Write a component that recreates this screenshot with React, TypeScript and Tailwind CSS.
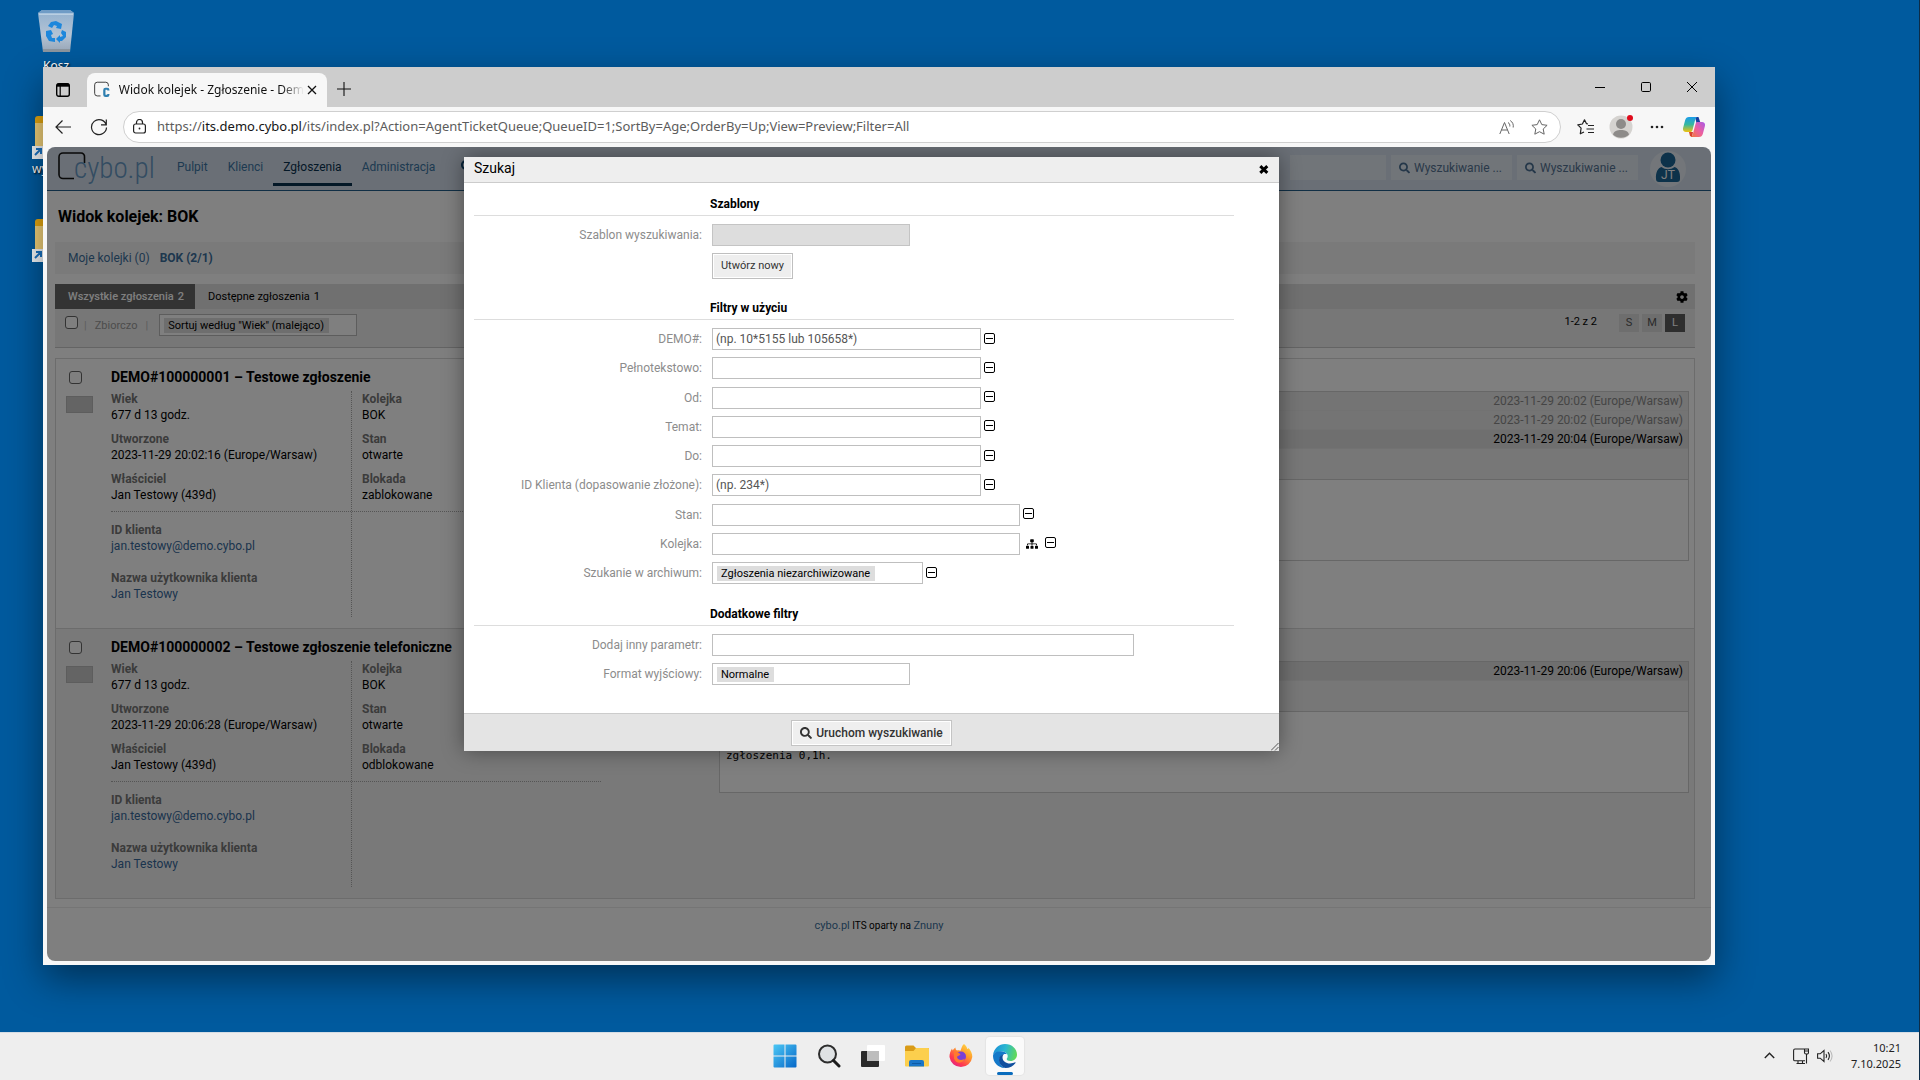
import type { ReactNode } from "react";
import { FaCog, FaSearch, FaSitemap } from "react-icons/fa";

type Field = { label: string; value: string; link?: boolean };

type Ticket = {
    id: string;
    title: string;
    left: Field[];
    right: Field[];
    articles: { date: string; active?: boolean }[];
    body: string;
    shaded?: boolean;
};

const tickets: Ticket[] = [
    {
        id: "DEMO#100000001",
        title: "Testowe zgłoszenie",
        left: [
            { label: "Wiek", value: "677 d 13 godz." },
            { label: "Utworzone", value: "2023-11-29 20:02:16 (Europe/Warsaw)" },
            { label: "Właściciel", value: "Jan Testowy (439d)" },
        ],
        right: [
            { label: "Kolejka", value: "BOK" },
            { label: "Stan", value: "otwarte" },
            { label: "Blokada", value: "zablokowane" },
        ],
        articles: [
            { date: "2023-11-29 20:02 (Europe/Warsaw)" },
            { date: "2023-11-29 20:02 (Europe/Warsaw)" },
            { date: "2023-11-29 20:04 (Europe/Warsaw)", active: true },
        ],
        body: "",
    },
    {
        id: "DEMO#100000002",
        title: "Testowe zgłoszenie telefoniczne",
        left: [
            { label: "Wiek", value: "677 d 13 godz." },
            { label: "Utworzone", value: "2023-11-29 20:06:28 (Europe/Warsaw)" },
            { label: "Właściciel", value: "Jan Testowy (439d)" },
        ],
        right: [
            { label: "Kolejka", value: "BOK" },
            { label: "Stan", value: "otwarte" },
            { label: "Blokada", value: "odblokowane" },
        ],
        articles: [{ date: "2023-11-29 20:06 (Europe/Warsaw)", active: true }],
        body: "zgłoszenia 0,1h.",
        shaded: true,
    },
];

/* ---------- desktop ---------- */

function RecycleBin() {
    return (
        <svg width="36" height="42" viewBox="0 0 36 42" aria-hidden>
            <defs>
                <linearGradient id="bin" x1="0" y1="0" x2="0" y2="1">
                    <stop offset="0" stopColor="#8fb0cf" />
                    <stop offset="0.6" stopColor="#b4c3d4" />
                    <stop offset="1" stopColor="#9aa9ba" />
                </linearGradient>
            </defs>
            <path d="M0 3 4 0h28l4 3-4 39H5z" fill="url(#bin)" />
            <path d="M0 3 4 0h28l4 3-2 1H2z" fill="#6f9cc6" />
            <path d="M1 4h34" stroke="#dce9f4" strokeWidth="1" />
            <path d="M5 39h27v3H5z" fill="#8d969f" />
            <g fill="#1d87dc">
                <path d="m13 12 5-1 4 2 2 1-1 5-5-1 1-2-3-1-2 3-4-2z" />
                <path d="m8 21 5-1 2 4-2 1 1 3h3v4l-6-1-3-5z" />
                <path d="m24 20 4 2 0 5-4 4-2 0v2l-4-4 4-4v2l3-1-2-3z" />
            </g>
        </svg>
    );
}

function FolderShortcut({ label }: { label?: string }) {
    return (
        <div className="flex w-12 flex-col">
            <svg width="48" height="44" viewBox="0 0 48 44" aria-hidden>
                <path d="M3 3a3 3 0 0 1 3-3h12l4 5h20v12H3z" fill="#e8a910" />
                <path d="M3 7h42v27H3z" fill="#f3d27a" />
                <path d="M0 30h12v13H0z" fill="#f4f7fa" />
                <path d="m3 39 6-6M4 33h5v5" stroke="#1a74c4" strokeWidth="2" fill="none" />
            </svg>
            <span className="mt-px text-xs text-white [text-shadow:1px_1px_2px_#000]">{label}</span>
        </div>
    );
}

/* ---------- browser chrome ---------- */

function IconButton({ label, children }: { label: string; children: ReactNode }) {
    return (
        <button type="button" aria-label={label} className="flex size-6 items-center justify-center text-[#222]">
            {children}
        </button>
    );
}

function TabStrip() {
    return (
        <div className="flex h-10 items-end bg-[#cdcdcd] pl-2">
            <div className="flex h-[34px] w-9 items-center">
                <IconButton label="Menu kart">
                    <svg width="14" height="14" viewBox="0 0 14 14" fill="none" stroke="#000" strokeWidth="1.4">
                        <rect x="0.7" y="0.7" width="12.6" height="12.6" rx="2" />
                        <path d="M1 2.2h12" strokeWidth="3" />
                        <path d="M4.2 3v10" strokeWidth="1.2" />
                    </svg>
                </IconButton>
            </div>
            <div className="flex h-[34px] w-60 items-center rounded-t-lg bg-[#f7f7f7] pb-px pl-[7px] pr-2">
                <svg width="17" height="17" viewBox="0 0 17 17" fill="none" aria-hidden>
                    <path
                        d="M7 15.4H3.5A2.8 2.8 0 0 1 .7 12.6V3.5A2.8 2.8 0 0 1 3.5.7h9.1a2.8 2.8 0 0 1 2.8 2.8V5"
                        stroke="#333"
                        strokeWidth="1"
                    />
                    <path
                        d="M15.400 9.500V9c0-.8-.5-1.300-1.300-1.300h-1.700c-.8 0-1.300.5-1.300 1.300v5c0 .8.5 1.300 1.300 1.300h1.700c.8 0 1.300-.5 1.300-1.300v-.7"
                        stroke="#2f7fb0"
                        strokeWidth="2.4"
                    />
                </svg>
                <span className="ml-[9px] whitespace-nowrap text-xs text-[#111] [mask-image:linear-gradient(to_right,#000_88%,transparent)]">
                    Widok kolejek - Zgłoszenie - Dem
                </span>
                <button type="button" aria-label="Zamknij kartę" className="ml-auto flex size-4 items-center justify-center">
                    <svg width="10" height="10" viewBox="0 0 10 10" stroke="#111" strokeWidth="1.3">
                        <path d="m1 1 8 8M9 1 1 9" />
                    </svg>
                </button>
            </div>
            <div className="flex h-[34px] items-center pb-[2px] pl-[5px]">
                <IconButton label="Nowa karta">
                    <svg width="14" height="14" viewBox="0 0 14 14" stroke="#111" strokeWidth="1.1">
                        <path d="M7 0v14M0 7h14" />
                    </svg>
                </IconButton>
            </div>
            <div className="mb-2 ml-auto flex gap-[22px] pr-[11px]">
                <IconButton label="Minimalizuj">
                    <svg width="10" height="10" viewBox="0 0 10 10" stroke="#000">
                        <path d="M0 5.5h10" />
                    </svg>
                </IconButton>
                <IconButton label="Maksymalizuj">
                    <svg width="10" height="10" viewBox="0 0 10 10" fill="none" stroke="#000">
                        <rect x="0.5" y="0.5" width="9" height="9" rx="1.2" />
                    </svg>
                </IconButton>
                <IconButton label="Zamknij">
                    <svg width="10" height="10" viewBox="0 0 10 10" stroke="#000">
                        <path d="m0 0 10 10M10 0 0 10" />
                    </svg>
                </IconButton>
            </div>
        </div>
    );
}

function Copilot() {
    return (
        <svg width="22" height="20" viewBox="0 0 22 20" aria-hidden>
            <defs>
                <linearGradient id="cpA" x1="0" y1="0" x2="0" y2="1">
                    <stop offset="0" stopColor="#1b9bea" />
                    <stop offset="0.5" stopColor="#35b8a0" />
                    <stop offset="1" stopColor="#f2c20c" />
                </linearGradient>
                <linearGradient id="cpB" x1="1" y1="0" x2="0" y2="1">
                    <stop offset="0" stopColor="#a85ae8" />
                    <stop offset="0.5" stopColor="#ec5fa0" />
                    <stop offset="1" stopColor="#f4793a" />
                </linearGradient>
            </defs>
            <path d="M12 0h3.5l2 6h-4z" fill="#173f9e" />
            <path d="M6 0h8l-1.5 1.5L9.5 13c-.5 1.5-1.2 2-2.5 2H3c-2.5 0-3.5-1.8-2.8-4.5l2-7.5C2.8 1 4 0 6 0z" fill="url(#cpA)" />
            <path d="M16 20H8l1.5-1.5L12.5 7c.5-1.5 1.2-2 2.5-2h4c2.5 0 3.5 1.8 2.8 4.5l-2 7.5c-.6 2-1.8 3-3.8 3z" fill="url(#cpB)" />
            <path d="M6 15h4l-1 5-2-1z" fill="#d8432b" />
        </svg>
    );
}

function Toolbar() {
    return (
        <div className="flex h-10 items-center bg-[#f7f7f7] pl-2 pr-[10px]">
            <IconButton label="Wstecz">
                <svg width="16" height="14" viewBox="0 0 16 14" fill="none" stroke="currentColor" strokeWidth="1.2">
                    <path d="M16 7H1M7.5.5 1 7l6.5 6.5" />
                </svg>
            </IconButton>
            <div className="w-3" />
            <IconButton label="Odśwież">
                <svg width="18" height="18" viewBox="0 0 18 18" fill="none" stroke="currentColor" strokeWidth="1.2">
                    <path d="M16.2 7A7.5 7.5 0 1 0 16.5 9.5M16.3 1.5v5.3H11" />
                </svg>
            </IconButton>
            <div className="ml-3 flex h-8 flex-1 items-center rounded-full border border-[#cfcfcf] bg-white pl-[9px] pr-[9px]">
                <svg width="13" height="16" viewBox="0 0 13 16" fill="none" stroke="#222" strokeWidth="1.2" aria-hidden>
                    <rect x="0.6" y="5" width="11.8" height="9" rx="2" />
                    <path d="M3.5 5V3.5a3 3 0 0 1 6 0V5" />
                    <circle cx="6.5" cy="9.5" r="0.9" fill="#222" stroke="none" />
                </svg>
                <a href="#" className="ml-[11px] flex-1 whitespace-nowrap text-[13px] text-[#5c5c5c]">
                    https://<span className="text-[#161616]">its.demo.cybo.pl</span>
                    /its/index.pl?Action=AgentTicketQueue;QueueID=1;SortBy=Age;OrderBy=Up;View=Preview;Filter=All
                </a>
                <div className="flex gap-2">
                    <IconButton label="Czytaj na głos">
                        <svg width="16" height="15" viewBox="0 0 16 15" fill="none" stroke="#666">
                            <path d="M.8 14 5.5 2.5 10.2 14M2.5 10h6M9 2.5c1.5.8 2 2.2 1.8 4M11.2.5c2.5 1.6 3.5 4 3 7" />
                        </svg>
                    </IconButton>
                    <IconButton label="Dodaj do ulubionych">
                        <svg width="17" height="16" viewBox="0 0 17 16" fill="none" stroke="#666">
                            <path d="m8.5.8 2.3 4.8 5.3.7-3.9 3.7 1 5.2-4.7-2.5-4.7 2.5 1-5.2L.9 6.300l5.300-.7z" strokeLinejoin="round" />
                        </svg>
                    </IconButton>
                </div>
            </div>
            <div className="ml-3 flex items-center gap-3">
                <IconButton label="Ulubione">
                    <svg width="17" height="16" viewBox="0 0 17 16" fill="none" stroke="#222" strokeWidth="1.2">
                        <path d="M11 5 9.5 4.700 7.500.8 5.400 5l-4.600.8 3.300 3.400-.8 5.600L7 13" strokeLinejoin="round" />
                        <path d="M11 6.5h6M9.5 10h7.5M11 13.5h6" />
                    </svg>
                </IconButton>
                <button type="button" aria-label="Profil" className="relative size-6">
                    <svg width="24" height="24" viewBox="0 0 24 24">
                        <circle cx="12" cy="12" r="11.5" fill="#d5d3d0" />
                        <circle cx="12" cy="9" r="5" fill="#8d8b89" />
                        <path d="M4 19.5C5 16 8 15 12 15s7 1 8 4.500a11.500 11.500 0 0 1-16 0z" fill="#8d8b89" />
                    </svg>
                    <span className="absolute right-0 top-0 size-[6px] rounded-full bg-[#e00b1c]" />
                </button>
                <IconButton label="Więcej">
                    <svg width="14" height="4" viewBox="0 0 14 4" fill="#222">
                        <circle cx="2" cy="2" r="1.3" />
                        <circle cx="7" cy="2" r="1.3" />
                        <circle cx="12" cy="2" r="1.3" />
                    </svg>
                </IconButton>
                <button type="button" aria-label="Copilot" className="ml-[2px]">
                    <Copilot />
                </button>
            </div>
        </div>
    );
}

/* ---------- ticket system ---------- */

function SearchBox({ id }: { id: string }) {
    return (
        <label htmlFor={id} className="flex h-[25px] w-[121px] items-center gap-1 bg-[#e2eaf3] px-2 text-[#4a6f92]">
            <FaSearch className="size-3" />
            <input
                id={id}
                type="text"
                aria-label="Wyszukiwanie"
                placeholder="Wyszukiwanie ..."
                className="w-[90px] bg-transparent text-xs placeholder:text-[#557392]"
            />
        </label>
    );
}

function AppHeader() {
    return (
        <header className="flex h-11 shrink-0 justify-between border-b border-[#235e8a] bg-[#d5dfec] pl-[11px] pr-[25px]">
            <div className="flex">
                <a href="#" aria-label="cybo.pl" className="flex pt-[5px]">
                    <svg width="28" height="28" viewBox="0 0 28 28" fill="none" stroke="#111" strokeWidth="1.6" aria-hidden>
                        <path d="M16 26.500H5A4 4 0 0 1 1 22.500V5a4 4 0 0 1 4-4h18a3.500 3.500 0 0 1 3.500 4v6" />
                    </svg>
                    <span className="-ml-3 w-[93px] whitespace-nowrap font-['Roboto_Condensed','Liberation_Sans_Narrow',Roboto] text-[29px] font-light leading-8 text-[#6798c4]">
                        cybo.pl
                    </span>
                </a>
                <nav className="flex text-xs leading-10 text-[#3b74a3]">
                    <a href="#" className="px-[10px]">Pulpit</a>
                    <a href="#" className="px-[10px]">Klienci</a>
                    <a href="#" className="h-[39px] border-b-[3px] border-[#08304f] px-[10px] text-[#08304f]">
                        Zgłoszenia
                    </a>
                    <a href="#" className="px-[10px]">Administracja</a>
                    <a href="#" aria-label="Szukaj" className="flex h-[38px] items-center pl-4 text-[#0f4a75]">
                        <FaSearch className="size-3" />
                    </a>
                </nav>
            </div>
            <div className="flex gap-[5px] pt-2">
                <input type="text" aria-label="Ostatnio oglądane" className="h-[25px] w-24 bg-[#e2eaf3]" />
                <SearchBox id="fulltext" />
                <SearchBox id="customer" />
                <svg width="36" height="36" viewBox="0 0 36 36" className="-mt-1 ml-[7px]" role="img" aria-label="JT">
                    <circle cx="18" cy="18" r="18" fill="#e6edf4" />
                    <circle cx="18" cy="9" r="7.5" fill="#1b6495" />
                    <path d="M6 28c-.5-7 2-11 5.5-12 4 3 9 3 13 0C28 17 30.5 21 30 28c0 2-1 3-3 3H9c-2 0-3-1-3-3z" fill="#1b6495" />
                    <text x="18" y="28" textAnchor="middle" fontSize="12" fill="#fff">
                        JT
                    </text>
                </svg>
            </div>
        </header>
    );
}

function FieldItem({ field }: { field: Field }) {
    return (
        <div className="leading-4">
            <div className="font-bold text-[#777]">{field.label}</div>
            {field.link ? (
                <a href="#" className="block text-[#36689b]">{field.value}</a>
            ) : (
                <div>{field.value}</div>
            )}
        </div>
    );
}

function TicketRow({ ticket }: { ticket: Ticket }) {
    return (
        <li className={`flex h-[270px] border-b border-[#d9d9d9] pr-[5px] ${ticket.shaded ? "bg-[#f2f2f2]" : "bg-white"}`}>
            <div className="flex w-[55px] flex-col pl-[10px] pt-3">
                <input
                    type="checkbox"
                    aria-label={`Zaznacz ${ticket.id}`}
                    className="ml-[3px] size-[13px] appearance-none rounded-[3px] border border-[#666] bg-white"
                />
                <span className="mt-3 h-[17px] w-[27px] border border-[#bbb] bg-[#c8c8c8]" />
            </div>
            <div className="w-[490px] pt-2 text-xs">
                <h2 className="h-6 whitespace-nowrap text-sm font-bold leading-5">
                    {ticket.id} – {ticket.title}
                </h2>
                <div className="flex border-b border-dotted border-[#aaa]">
                    <div className="flex h-[120px] w-[241px] flex-col gap-2 border-r border-dotted border-[#aaa]">
                        {ticket.left.map((f) => (
                            <FieldItem key={f.label} field={f} />
                        ))}
                    </div>
                    <div className="flex flex-col gap-2 pl-[10px]">
                        {ticket.right.map((f) => (
                            <FieldItem key={f.label} field={f} />
                        ))}
                    </div>
                </div>
                <div className="flex h-[105px] w-[241px] flex-col gap-4 border-r border-dotted border-[#aaa] pt-[10px]">
                    <FieldItem field={{ label: "ID klienta", value: "jan.testowy@demo.cybo.pl", link: true }} />
                    <FieldItem field={{ label: "Nazwa użytkownika klienta", value: "Jan Testowy", link: true }} />
                </div>
            </div>
            <div className="ml-[118px] flex-1 pt-8">
                <div className="border border-[#cfcfcf] text-right text-xs">
                    {ticket.articles.map((a, i) => (
                        <div
                            key={i}
                            className={`h-[19px] border-b border-[#e4e4e4] pr-[5px] leading-[18px] ${
                                a.active ? "bg-[#dedede] text-black" : "bg-[#e8e8e8] text-[#8b8b8b]"
                            }`}
                        >
                            {a.date}
                        </div>
                    ))}
                    <div className="h-[31px] border-b border-[#cfcfcf] bg-[#eee]" />
                    <pre className="h-20 bg-white pl-[6px] pt-9 text-left font-['DejaVu_Sans_Mono',monospace] text-[11px] leading-4">
                        {ticket.body}
                    </pre>
                </div>
            </div>
        </li>
    );
}

function SizeButton({ label, active }: { label: string; active?: boolean }) {
    return (
        <button
            type="button"
            className={`h-[18px] w-5 leading-[18px] ${active ? "bg-[#5c5c5c] text-white" : "bg-[#dcdcdc] text-[#555]"}`}
        >
            {label}
        </button>
    );
}

function QueueView() {
    return (
        <div className="flex h-full flex-col bg-white">
            <AppHeader />
            <main className="flex-1 pl-2 pr-4">
                <h1 className="py-[15px] pl-[3px] text-base font-bold leading-[21px]">Widok kolejek: BOK</h1>
                <div className="flex h-8 items-center gap-[10px] bg-[#f5f5f5] pl-[13px] text-xs text-[#3b6f9c]">
                    <a href="#">Moje kolejki (0)</a>
                    <a href="#" className="font-bold">BOK (2/1)</a>
                </div>
                <div className="mt-[10px] flex h-[25px] items-center bg-[#e0e0e0] pr-[7px] text-[11px]">
                    <a href="#" className="flex h-[25px] w-[140px] items-center gap-1 bg-[#666] pl-[13px] pt-px font-medium text-white">
                        <span>Wszystkie zgłoszenia</span>
                        <span>2</span>
                    </a>
                    <a href="#" className="flex gap-1 pl-[13px] pt-px">
                        <span>Dostępne zgłoszenia</span>
                        <span>1</span>
                    </a>
                    <button type="button" aria-label="Ustawienia" className="ml-auto">
                        <FaCog className="size-3" />
                    </button>
                </div>
                <div className="flex h-[39px] items-start border-b border-[#c8c8c8] bg-[#eee] pl-[10px] pr-[10px] pt-[5px] text-[11px]">
                    <input
                        type="checkbox"
                        aria-label="Zaznacz wszystkie"
                        className="mt-[2px] size-[13px] appearance-none rounded-[3px] border border-[#666] bg-white"
                    />
                    <span className="ml-[6px] mt-1 flex gap-2 text-[#bbb]">
                        <span>|</span>
                        <span className="text-[#999]">Zbiorczo</span>
                        <span>|</span>
                    </span>
                    <div className="ml-[11px] flex h-[22px] w-[198px] items-center border border-[#bbb] bg-white pl-1">
                        <select aria-label="Sortowanie" className="h-[15px] appearance-none bg-[#ddd] px-1 leading-[15px]">
                            <option>Sortuj według "Wiek" (malejąco)</option>
                        </select>
                    </div>
                    <span className="ml-auto">1-2 z 2</span>
                    <div className="ml-[22px] flex gap-[3px]">
                        <SizeButton label="S" />
                        <SizeButton label="M" />
                        <SizeButton label="L" active />
                    </div>
                </div>
                <ul className="mt-[10px] border border-b-0 border-[#d9d9d9]">
                    {tickets.map((t) => (
                        <TicketRow key={t.id} ticket={t} />
                    ))}
                </ul>
            </main>
            <footer className="h-[54px] shrink-0 border-t border-[#ebebeb] pt-[10px] text-center text-[10px] leading-4">
                <a href="#" className="text-[11px] text-[#3b6f9c]">cybo.pl</a> ITS oparty na{" "}
                <a href="#" className="text-[11px] text-[#3b6f9c]">Znuny</a>
            </footer>
        </div>
    );
}

/* ---------- search dialog ---------- */

function SectionHeading({ children }: { children: ReactNode }) {
    return (
        <h3 className="mb-2 mr-[35px] border-b border-[#ddd] pl-[236px] text-xs font-bold leading-[22px]">
            {children}
        </h3>
    );
}

function FormRow({ id, label, children }: { id: string; label: string; children: ReactNode }) {
    return (
        <div className="flex h-[22px] items-center">
            <label htmlFor={id} className="mr-[10px] w-[228px] text-right text-xs text-[#8c8c8c]">
                {label}:
            </label>
            {children}
        </div>
    );
}

function RemoveButton() {
    return (
        <button type="button" aria-label="Usuń filtr" className="mb-[2px] ml-[3px] flex size-[11px]">
            <svg width="11" height="11" viewBox="0 0 11 11" fill="none" stroke="#000">
                <rect x="0.5" y="0.5" width="10" height="10" rx="1.5" />
                <path d="M2 5.5h7" />
            </svg>
        </button>
    );
}

const textFilters = [
    { id: "number", label: "DEMO#", hint: "(np. 10*5155 lub 105658*)" },
    { id: "fulltextFilter", label: "Pełnotekstowo" },
    { id: "from", label: "Od" },
    { id: "subject", label: "Temat" },
    { id: "to", label: "Do" },
    { id: "customerId", label: "ID Klienta (dopasowanie złożone)", hint: "(np. 234*)" },
];

const inputBase = "h-[22px] border border-[#bfbfbf] bg-white px-[3px] text-xs placeholder:text-[#555]";

function SearchDialog() {
    return (
        <div role="dialog" aria-label="Szukaj" className="relative w-[815px] bg-white shadow-[0_0_20px_rgba(0,0,0,0.4)]">
            <div className="flex h-[26px] items-center justify-between border-b border-[#ccc] bg-[#eee] pl-[10px] pr-[10px]">
                <h2 className="pb-1 text-sm">Szukaj</h2>
                <button type="button" aria-label="Zamknij" className="flex">
                    <svg width="10" height="9" viewBox="0 0 10 9" stroke="#000" strokeWidth="3">
                        <path d="m1.3 1.2 7 6.6M8.3 1.2l-7 6.6" />
                    </svg>
                </button>
            </div>
            <div className="px-[10px] pb-7 pt-[10px]">
                <SectionHeading>Szablony</SectionHeading>
                <FormRow id="template" label="Szablon wyszukiwania">
                    <select id="template" disabled className="h-[22px] w-[198px] appearance-none border border-[#c4c4c4] bg-[#ddd]">
                        <option />
                    </select>
                </FormRow>
                <button
                    type="button"
                    className="mb-[18px] ml-[238px] mt-[7px] block h-[26px] w-[81px] border border-[#bfbfbf] bg-[#eee] text-[11px] text-[#333] shadow-[inset_0_0_0_1px_#fff]"
                >
                    Utwórz nowy
                </button>
                <SectionHeading>Filtry w użyciu</SectionHeading>
                <div className="mb-[19px] flex h-64 flex-col justify-between">
                    {textFilters.map((f) => (
                        <FormRow key={f.id} id={f.id} label={f.label}>
                            <input id={f.id} type="text" placeholder={f.hint} className={`${inputBase} w-[269px]`} />
                            <RemoveButton />
                        </FormRow>
                    ))}
                    <FormRow id="state" label="Stan">
                        <input id="state" type="text" className={`${inputBase} w-[308px]`} />
                        <RemoveButton />
                    </FormRow>
                    <FormRow id="queue" label="Kolejka">
                        <input id="queue" type="text" className={`${inputBase} w-[308px]`} />
                        <button type="button" aria-label="Drzewo" className="ml-[6px] mr-1">
                            <FaSitemap className="size-3" />
                        </button>
                        <RemoveButton />
                    </FormRow>
                    <FormRow id="archive" label="Szukanie w archiwum">
                        <div className="flex h-[22px] w-[211px] items-center border border-[#bfbfbf] bg-white pl-1">
                            <select id="archive" className="h-[15px] appearance-none bg-[#ddd] px-1 text-[11px] leading-[15px]">
                                <option>Zgłoszenia niezarchiwizowane</option>
                            </select>
                        </div>
                        <RemoveButton />
                    </FormRow>
                </div>
                <SectionHeading>Dodatkowe filtry</SectionHeading>
                <div className="flex flex-col gap-[7px]">
                    <FormRow id="param" label="Dodaj inny parametr">
                        <input id="param" type="text" className={`${inputBase} w-[422px]`} />
                    </FormRow>
                    <FormRow id="format" label="Format wyjściowy">
                        <div className="flex h-[22px] w-[198px] items-center border border-[#bfbfbf] bg-white pl-1">
                            <select id="format" className="h-[15px] appearance-none bg-[#ddd] px-1 text-[11px] leading-[15px]">
                                <option>Normalne</option>
                            </select>
                        </div>
                    </FormRow>
                </div>
            </div>
            <div className="flex h-[38px] items-center justify-center border-t border-[#ccc] bg-[#e4e4e4]">
                <button
                    type="button"
                    className="flex h-[26px] w-[161px] items-center justify-center gap-1 border border-[#c4c4c4] bg-[#efefef] text-xs font-medium text-[#333] shadow-[inset_0_0_0_1px_#fff]"
                >
                    <FaSearch className="size-3" />
                    Uruchom wyszukiwanie
                </button>
            </div>
            <svg width="8" height="8" viewBox="0 0 8 8" stroke="#555" className="absolute bottom-0 right-0" aria-hidden>
                <path d="m0 7.5 7.5-7.5M4 7.5 7.5 4" />
            </svg>
        </div>
    );
}

function BrowserWindow() {
    return (
        <section className="absolute bottom-[67px] left-[43px] right-[204px] top-[67px] flex flex-col bg-[#f7f7f7] shadow-[0_14px_36px_rgba(0,0,0,0.45)]">
            <TabStrip />
            <Toolbar />
            <div className="relative mx-1 mb-1 flex-1 overflow-hidden rounded-lg font-[Roboto,sans-serif] text-black">
                <QueueView />
                <div className="absolute inset-0 flex items-start justify-center bg-black/50 pr-[15px] pt-[10px]">
                    <SearchDialog />
                </div>
            </div>
        </section>
    );
}

/* ---------- taskbar ---------- */

function WindowsIcon() {
    return (
        <svg width="24" height="24" viewBox="0 0 24 24">
            <defs>
                <linearGradient id="win" x1="0" y1="0" x2="1" y2="1">
                    <stop offset="0" stopColor="#4cc8f5" />
                    <stop offset="1" stopColor="#0667c8" />
                </linearGradient>
            </defs>
            <path d="M.5 1.5a1 1 0 0 1 1-1h10v11H.5zM12.5.5h10a1 1 0 0 1 1 1v10h-11zM.5 12.5h11v11h-10a1 1 0 0 1-1-1zM12.5 12.5h11v10a1 1 0 0 1-1 1h-10z" fill="url(#win)" />
        </svg>
    );
}

function SearchIcon() {
    return (
        <svg width="24" height="24" viewBox="0 0 24 24" fill="none">
            <circle cx="10.5" cy="10" r="8.5" fill="#dfe2e4" stroke="#2d2d2d" strokeWidth="2" />
            <path d="m16.5 16.5 5.5 5.5" stroke="#1b1b1b" strokeWidth="3" strokeLinecap="round" />
        </svg>
    );
}

function TaskViewIcon() {
    return (
        <svg width="24" height="24" viewBox="0 0 24 24">
            <rect x="0" y="7" width="18" height="16" rx="1" fill="#2a2a2a" />
            <rect x="6" y="1" width="18" height="16" rx="1" fill="#fff" />
            <path d="M6 7h12v10H6z" fill="#bdbdbd" />
        </svg>
    );
}

function ExplorerIcon() {
    return (
        <svg width="24" height="24" viewBox="0 0 24 24">
            <path d="M0 3a1.5 1.5 0 0 1 1.5-1.5h7L11 4H23a1 1 0 0 1 1 1v4H0z" fill="#d99b17" />
            <path d="M0 7h8.500L11 4H23a1 1 0 0 1 1 1v16.500a1 1 0 0 1-1 1H1a1 1 0 0 1-1-1z" fill="#fccf4d" />
            <path d="M4 22.500V18a2 2 0 0 1 2-2h11a2 2 0 0 1 2 2v4.500z" fill="#1976c8" />
            <path d="M7 19.5h9" stroke="#0d5aa3" />
        </svg>
    );
}

function FirefoxIcon() {
    return (
        <svg width="24" height="24" viewBox="0 0 24 24">
            <defs>
                <linearGradient id="fx" x1="0.9" y1="0" x2="0.2" y2="1">
                    <stop offset="0" stopColor="#ffe34a" />
                    <stop offset="0.4" stopColor="#ff9a2b" />
                    <stop offset="0.75" stopColor="#ff3b4e" />
                    <stop offset="1" stopColor="#e0208a" />
                </linearGradient>
            </defs>
            <path
                d="M15 0c2 1.5 3 3.5 3.3 5 1-.2 1.2-1 1.2-1 2 2 4 5.5 3.8 9A11.5 11.5 0 0 1 .5 13C.4 10 1.5 7 3 4.5l.6 2C4.5 5 5.5 4 6.5 3.5 6.4 5 7 6 8 6.5c1.6-.6 3-.3 3.5.2C12.5 4 13 1.5 15 0z"
                fill="url(#fx)"
            />
            <circle cx="12" cy="12.5" r="5" fill="#7a3fd6" />
            <path d="M5 8c3 0 5 .5 6.5 2.5-1 1.5-3 1-3.5 2.5.5 3 5 4 8 1.5-1.500 5-9 6-11 0z" fill="#ff7a2e" />
        </svg>
    );
}

function EdgeIcon() {
    return (
        <svg width="24" height="24" viewBox="0 0 24 24">
            <defs>
                <linearGradient id="edA" x1="0" y1="0.3" x2="1" y2="0.5">
                    <stop offset="0" stopColor="#1a8fd8" />
                    <stop offset="0.5" stopColor="#2cb8cf" />
                    <stop offset="1" stopColor="#62d956" />
                </linearGradient>
            </defs>
            <path d="M0 11C.8 4.5 6 0 12 0c7 0 12 5 12 10.500 0 4-3 6.500-6.500 6.500-2.500 0-3.800-1-3.800-2 0-.7 1-1.200 1-3C14.700 9.500 12 7.500 8.500 7.500 4.500 7.500 1 9 0 11z" fill="url(#edA)" />
            <path d="M0 12c0-3 3.500-4.800 7.500-4.800 3 0 5.500 1 6.500 3-4-1-7.500 2-7.500 6 0 3.500 2.500 6.500 6 7.800C5.500 24.300 0 18.500 0 12z" fill="#1479c9" />
            <path d="M9.500 13.500c0 3.500 3.500 6 7.500 6 2 0 3.700-.5 5-1.200.5-.2.8.2.5.6C20.500 22 16.500 24 12.500 24c-4-1.200-6.500-4.500-6.500-8 0-3 2-5.500 5-6-1 1-1.500 2-1.500 3.500z" fill="#11509f" />
        </svg>
    );
}

const apps = [
    { name: "Start", icon: <WindowsIcon /> },
    { name: "Wyszukaj", icon: <SearchIcon /> },
    { name: "Widok zadań", icon: <TaskViewIcon /> },
    { name: "Eksplorator plików", icon: <ExplorerIcon /> },
    { name: "Firefox", icon: <FirefoxIcon /> },
    { name: "Edge", icon: <EdgeIcon />, active: true },
];

function Taskbar() {
    return (
        <footer className="flex h-12 shrink-0 items-center border-t border-[#d5dde5] bg-[#eee] pb-[2px] pl-8">
            <nav className="flex flex-1 justify-center gap-[6px]">
                {apps.map((app) => (
                    <button
                        key={app.name}
                        type="button"
                        aria-label={app.name}
                        className={`relative flex size-[38px] items-center justify-center rounded ${
                            app.active ? "bg-[#fafafa] shadow-[0_0_1px_1px_#e4e4e4]" : ""
                        }`}
                    >
                        {app.icon}
                        {app.active && <span className="absolute bottom-0 h-[3px] w-4 rounded-full bg-[#0a6cbd]" />}
                    </button>
                ))}
            </nav>
            <div className="flex w-[161px] items-center pl-[6px] pr-[18px] text-[#222]">
                <svg width="11" height="7" viewBox="0 0 11 7" fill="none" stroke="currentColor" strokeWidth="1.4">
                    <path d="m.8 6 4.7-4.7L10.2 6" />
                </svg>
                <svg width="16" height="16" viewBox="0 0 16 16" fill="none" stroke="currentColor" strokeWidth="1.1" className="ml-[18px]">
                    <path d="M11 1H2A1.4 1.4 0 0 0 .6 2.4v9A1.4 1.4 0 0 0 2 12.8h10M5 13v2.4M9.5 13v2.4M3.5 15.5H12M11.5 1h4v3.5A1.5 1.5 0 0 1 14 6h-1a1.5 1.5 0 0 1-1.5-1.5zM13.5 6v9.5M11.5 3h4" />
                </svg>
                <svg width="16" height="14" viewBox="0 0 16 14" fill="none" stroke="currentColor" strokeWidth="1.1" className="ml-2">
                    <path d="M.6 4.8v4.4h2.6L7 12.5v-11L3.2 4.8zM9 5c.8 1.2.8 2.8 0 4M11 3.2c1.7 2.3 1.7 5.3 0 7.6" />
                    <path d="M13 1.5c2.5 3.3 2.5 7.7 0 11" stroke="#bbb" />
                </svg>
                <time className="ml-auto whitespace-nowrap text-right text-[11px] leading-4">
                    10:21
                    <br />
                    7.10.2025
                </time>
            </div>
        </footer>
    );
}

export default function App() {
    return (
        <div className="flex h-screen flex-col border-r border-[#0c2c48] bg-[#005a9e] font-['Noto_Sans',sans-serif]">
            <div className="relative flex-1 overflow-hidden">
                <div className="absolute left-8 top-[10px] flex w-12 flex-col items-center text-xs text-white [text-shadow:1px_1px_2px_#000]">
                    <RecycleBin />
                    <span className="mt-[6px]">Kosz</span>
                </div>
                <div className="absolute left-8 top-[116px]">
                    <FolderShortcut label="wy" />
                </div>
                <div className="absolute left-8 top-[219px]">
                    <FolderShortcut />
                </div>
                <BrowserWindow />
            </div>
            <Taskbar />
        </div>
    );
}
